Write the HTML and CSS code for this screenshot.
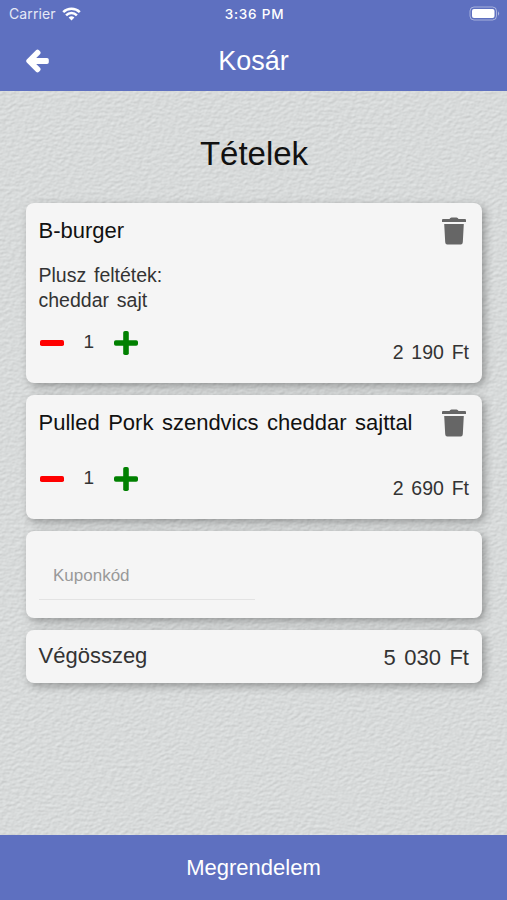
FILE: index.html
```html
<!DOCTYPE html>
<html lang="hu">
<head>
    <meta charset="UTF-8">
    <meta name="viewport" content="width=device-width, initial-scale=1.0">
    <title>Kosár</title>
    <link rel="stylesheet" href="styles.css">
</head>
<body>
    <!-- plaster wall behind the cart -->
    <svg class="wall" width="507" height="900" aria-hidden="true">
        <filter id="plaster" x="0" y="0" width="100%" height="100%" color-interpolation-filters="sRGB">
            <feTurbulence type="fractalNoise" baseFrequency="0.22 0.34" numOctaves="3" seed="8" result="noise"/>
            <feDiffuseLighting in="noise" surfaceScale="0.26" diffuseConstant="1" lighting-color="#f4f7f7">
                <feDistantLight azimuth="235" elevation="62"/>
            </feDiffuseLighting>
        </filter>
        <rect width="507" height="900" filter="url(#plaster)"/>
    </svg>

    <div class="app">
        <header class="header">
            <div class="status-bar">
                <div class="carrier">
                    <span>Carrier</span>
                    <svg width="19" height="14" viewBox="0 0 19 14" fill="none" stroke="#fff" stroke-width="2.5">
                        <path d="M1.2 5.1a11.8 11.8 0 0 1 16.6 0"/>
                        <path d="M4.1 8.3a7.6 7.6 0 0 1 10.8 0"/>
                        <path d="M9.5 13.6 6.6 10.6a4.1 4.1 0 0 1 5.8 0z" fill="#fff" stroke="none"/>
                    </svg>
                </div>
                <span class="time">3:36 PM</span>
                <svg class="battery" width="31" height="15" viewBox="0 0 31 15">
                    <rect x="1" y="1" width="26.5" height="13" rx="4" fill="none" stroke="#fff" stroke-opacity=".45"/>
                    <rect x="3" y="3" width="22.5" height="9" rx="2" fill="#fff"/>
                    <path d="M29 5.2q2.2 2.3 0 4.6z" fill="#fff" fill-opacity=".5"/>
                </svg>
            </div>
            <div class="nav-bar">
                <button class="icon-button back" aria-label="Vissza">
                    <svg width="24" height="24" viewBox="0 0 24 24" fill="#fff">
                        <path d="M1.8 10.6 11 1.2q1.5-1.4 3 0l1 1q1.3 1.5 0 3L11.2 9H22q1.8 0 1.8 1.8v2.4Q23.800 15 22 15H11.200l3.800 3.800q1.300 1.500 0 3l-1 1q-1.500 1.400-3 0L1.800 13.400q-1.300-1.400 0-2.800z"/>
                    </svg>
                </button>
                <h1>Kosár</h1>
            </div>
        </header>

        <main class="cart">
            <h2>Tételek</h2>

            <section class="card item">
                <div class="item-head">
                    <h3>B-burger</h3>
                    <button class="icon-button" aria-label="Törlés">
                        <svg width="24" height="28" viewBox="0 0 24 28" fill="#666">
                            <path d="M1 2h6.500q.500-1.500 2-1.500h5q1.500 0 2 1.500H23q1 0 1 1v2H0V3q0-1 1-1zM2.200 7h19.600l-1 18.200q-.200 2.300-2 2.300H5.200q-1.800 0-2-2.300z"/>
                        </svg>
                    </button>
                </div>
                <p class="extras">Plusz feltétek:<br>cheddar sajt</p>
                <div class="item-foot">
                    <div class="quantity">
                        <button class="icon-button" aria-label="Kevesebb">
                            <svg width="24" height="24" viewBox="0 0 24 24" fill="#f00"><rect y="9" width="24" height="6" rx="1.8"/></svg>
                        </button>
                        <span>1</span>
                        <button class="icon-button" aria-label="Több">
                            <svg width="24" height="24" viewBox="0 0 24 24" fill="#008000"><rect y="9.2" width="24" height="5.6" rx="1.8"/><rect x="9.2" width="5.6" height="24" rx="1.8"/></svg>
                        </button>
                    </div>
                    <span class="price">2 190 Ft</span>
                </div>
            </section>

            <section class="card item">
                <div class="item-head">
                    <h3>Pulled Pork szendvics cheddar sajttal</h3>
                    <button class="icon-button" aria-label="Törlés">
                        <svg width="24" height="28" viewBox="0 0 24 28" fill="#666">
                            <path d="M1 2h6.500q.500-1.500 2-1.500h5q1.500 0 2 1.500H23q1 0 1 1v2H0V3q0-1 1-1zM2.200 7h19.600l-1 18.200q-.200 2.300-2 2.300H5.200q-1.800 0-2-2.300z"/>
                        </svg>
                    </button>
                </div>
                <div class="item-foot">
                    <div class="quantity">
                        <button class="icon-button" aria-label="Kevesebb">
                            <svg width="24" height="24" viewBox="0 0 24 24" fill="#f00"><rect y="9" width="24" height="6" rx="1.8"/></svg>
                        </button>
                        <span>1</span>
                        <button class="icon-button" aria-label="Több">
                            <svg width="24" height="24" viewBox="0 0 24 24" fill="#008000"><rect y="9.2" width="24" height="5.6" rx="1.8"/><rect x="9.2" width="5.6" height="24" rx="1.8"/></svg>
                        </button>
                    </div>
                    <span class="price">2 690 Ft</span>
                </div>
            </section>

            <section class="card coupon">
                <input type="text" name="coupon" placeholder="Kuponkód">
            </section>

            <section class="card total">
                <span>Végösszeg</span>
                <span class="total-price">5 030 Ft</span>
            </section>
        </main>

        <button class="order-button">Megrendelem</button>
    </div>
</body>
</html>
```

FILE: styles.css
```css
* {
    box-sizing: border-box;
}
body {
    margin: 0;
    background-color: #d8dcdc;
    font-family: "Liberation Sans", Arial, sans-serif;
    color: #333;
}
h1, h2, h3, p {
    margin: 0;
    font-weight: normal;
}
svg {
    display: block;
}
.wall {
    position: absolute;
    top: 0;
    left: 0;
}
.app {
    position: relative;
    display: flex;
    flex-direction: column;
    height: 900px;
}
.icon-button {
    padding: 0;
    border: none;
    background: none;
}

/* header */
.header {
    height: 91px;
    background-color: #5e70c0;
    color: #fff;
}
.status-bar {
    display: grid;
    grid-template-columns: 1fr auto 1fr;
    align-items: center;
    height: 27px;
    padding: 0 7px 0 9px;
    font-family: Inter, "Liberation Sans", sans-serif;
    font-size: 14px;
}
.carrier {
    display: flex;
    align-items: center;
    gap: 6px;
    color: #e6e9f6;
    letter-spacing: 0.1px;
}
.time {
    font-size: 13.5px;
    font-weight: 500;
    letter-spacing: 0.8px;
}
.battery {
    justify-self: end;
}
.nav-bar {
    display: grid;
    grid-template-columns: 80px 1fr 80px;
    align-items: center;
    height: 68px;
}
.back {
    padding-left: 25px;
}
.nav-bar h1 {
    font-size: 27px;
    text-align: center;
}

/* cart */
.cart {
    flex: 1;
    padding: 44px 25px 0 26px;
}
.cart h2 {
    margin-bottom: 30px;
    font-size: 33px;
    line-height: 38px;
    text-align: center;
    color: #111;
}
.card {
    margin-bottom: 12px;
    padding: 0 13px 0 12.5px;
    border-radius: 8px;
    background-color: #f5f5f5;
    box-shadow: 3px 3px 8px rgba(0, 0, 0, 0.32);
}
.item {
    padding-top: 14px;
    padding-bottom: 19px;
}
.item-head {
    display: flex;
    justify-content: space-between;
    height: 28px;
    padding-right: 3px;
}
.item h3 {
    font-size: 22px;
    line-height: 28px;
    word-spacing: 2.4px;
    white-space: nowrap;
    color: #111;
}
.extras {
    margin-top: 18px;
    font-size: 19.5px;
    line-height: 25px;
    word-spacing: 2.4px;
}
.item-foot {
    display: flex;
    justify-content: space-between;
    height: 45px;
    margin-top: 18px;
}
.extras + .item-foot {
    margin-top: 6px;
}
.quantity {
    display: flex;
    align-items: center;
    gap: 20px;
    height: 48px;
    padding-left: 1px;
    font-size: 19px;
}
.quantity span {
    padding-bottom: 2px;
}
.price {
    align-self: flex-end;
    font-size: 19.5px;
    line-height: 23px;
    word-spacing: 2.4px;
}
.coupon {
    height: 87px;
    padding-top: 22px;
}
.coupon input {
    display: block;
    width: 216px;
    height: 47px;
    padding: 0 14.5px;
    border: none;
    border-bottom: 1px solid #e3e3e3;
    background: none;
    font-family: inherit;
    font-size: 17px;
}
.coupon input::placeholder {
    color: #999;
}
.total {
    display: flex;
    justify-content: space-between;
    height: 53px;
    font-size: 22px;
    line-height: 52px;
}
.total-price {
    padding-top: 2px;
    word-spacing: 2.4px;
}

.order-button {
    height: 65px;
    padding: 0;
    border: none;
    background-color: #5e70c0;
    color: #fff;
    font-family: inherit;
    font-size: 22px;
}
```
